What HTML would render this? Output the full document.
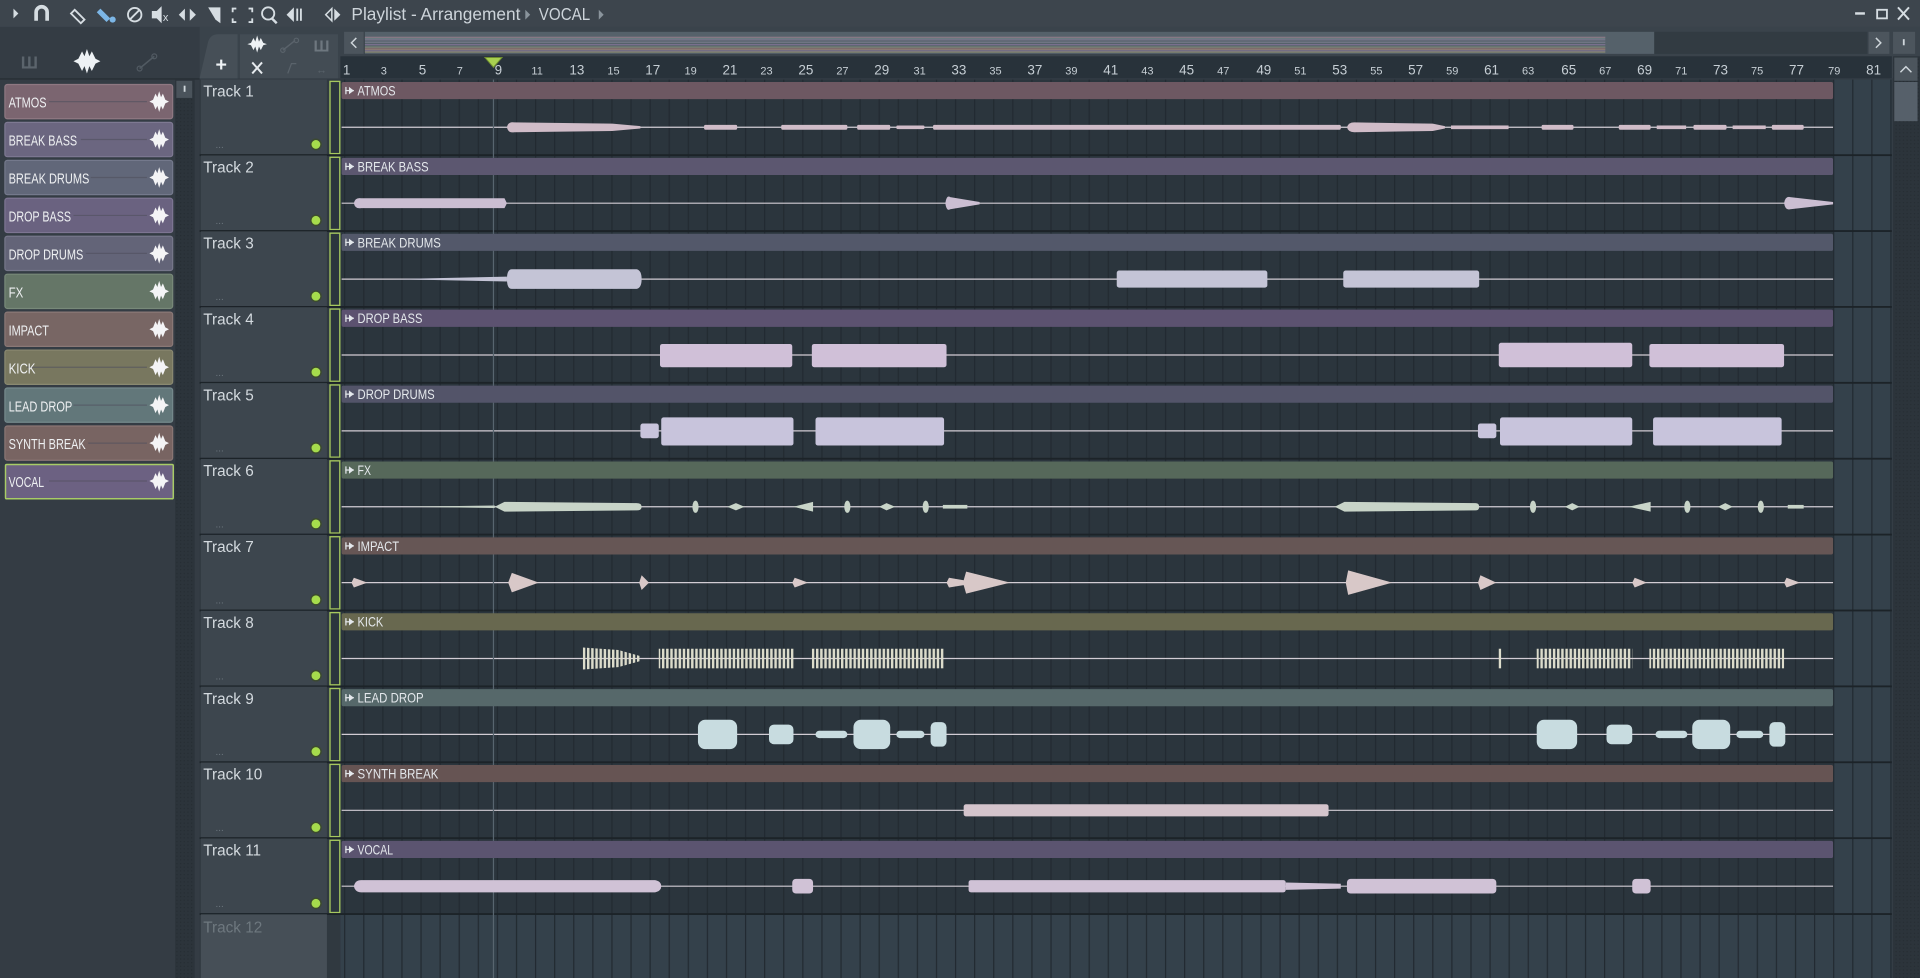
<!DOCTYPE html>
<html><head><meta charset="utf-8"><style>
html,body{margin:0;padding:0;background:#343d45;overflow:hidden}
svg{display:block}
text{font-family:"Liberation Sans",sans-serif}
</style></head><body>
<svg width="1920" height="978" viewBox="0 0 1568 799" preserveAspectRatio="none" xmlns="http://www.w3.org/2000/svg">
<defs>
<pattern id="grid" x="281" y="0" width="15.59" height="10" patternUnits="userSpaceOnUse">
<rect x="0" y="0" width="1" height="10" fill="#222a31"/>
</pattern>
<pattern id="stripe" x="0" y="0" width="3.4" height="10" patternUnits="userSpaceOnUse">
<rect x="0" y="0" width="2" height="10" fill="#dcdccb"/>
</pattern>
<pattern id="hatch" width="3" height="3" patternUnits="userSpaceOnUse">
<rect width="3" height="3" fill="#2c343b"/><rect width="1" height="1" fill="#262d33"/>
</pattern>
</defs>

<!-- top toolbar -->
<rect x="0" y="0" width="1568" height="22" fill="#3d454d"/>
<g fill="#d6dde2" font-size="14">
<polygon points="11,7 15,11 11,15"/>
<path d="M28,17 V10 a6,6 0 0 1 12,0 V17 h-3 V10 a3,3 0 0 0 -6,0 V17z"/>
<path d="M61,8 l8,8 l-3,3 l-8,-8z" fill="none" stroke="#d6dde2" stroke-width="1.5"/>
<path d="M82,7 l8,8 l-3,3 l-8,-8z" fill="#7cb6e6"/><circle cx="92" cy="16" r="2.5" fill="#7cb6e6"/>
<circle cx="110" cy="12" r="5.5" fill="none" stroke="#d6dde2" stroke-width="1.5"/><line x1="106" y1="16" x2="114" y2="8" stroke="#d6dde2" stroke-width="1.5"/>
<polygon points="124,9 128,9 132,5 132,19 128,15 124,15"/><text x="133" y="17" font-size="9">x</text>
<polygon points="146,12 151,7 151,17"/><polygon points="160,12 155,7 155,17"/>
<path d="M170,6 l10,0 l0,13 l-4,-3z"/>
<path d="M193,7 h-3 v3 M203,7 h3 v3 M193,18 h-3 v-3 M203,18 h3 v-3" fill="none" stroke="#d6dde2" stroke-width="1.5"/>
<circle cx="219" cy="11" r="5" fill="none" stroke="#d6dde2" stroke-width="1.5"/><line x1="222" y1="15" x2="226" y2="19" stroke="#d6dde2" stroke-width="2"/>
<polygon points="234,12 240,6 240,18"/><rect x="242" y="7" width="1.5" height="10"/><rect x="245" y="7" width="1.5" height="10"/>
<polygon points="266,12 271,7 271,17" fill="none" stroke="#d6dde2" stroke-width="1.2"/><polygon points="273,7 278,12 273,17"/>
</g>
<text x="287" y="16.5" font-size="14" fill="#cdd4da" textLength="138" lengthAdjust="spacingAndGlyphs">Playlist - Arrangement</text>
<polygon points="429,8 433,12 429,16" fill="#8a949c"/>
<text x="440" y="16.5" font-size="14" fill="#cdd4da" textLength="42" lengthAdjust="spacingAndGlyphs">VOCAL</text>
<polygon points="489,8 493,12 489,16" fill="#8a949c"/>
<rect x="1515" y="10" width="8" height="2" fill="#d6dde2"/>
<rect x="1533" y="8" width="8" height="7" fill="none" stroke="#d6dde2" stroke-width="1.5"/>
<path d="M1550,6 l9,10 M1559,6 l-9,10" stroke="#d6dde2" stroke-width="1.6"/>

<!-- left panel -->
<rect x="0" y="22" width="163" height="777" fill="#343c44"/>
<rect x="0" y="64" width="163" height="1" fill="#262d33"/>
<text x="17" y="56" font-size="14" fill="#5b646c" font-weight="bold">Ш</text>
<g fill="#eef2f5"><path d="M60,50 l4,-2 l3,-6 l2,4 l2,-6 l2,6 l2,-4 l3,6 l4,2 l-4,2 l-3,6 l-2,-4 l-2,6 l-2,-6 l-2,4 l-3,-6z"/></g>
<path d="M114,56 l12,-10" stroke="#515a62" stroke-width="1.3"/><circle cx="114" cy="56" r="2" fill="none" stroke="#515a62"/><circle cx="126" cy="46" r="2" fill="none" stroke="#515a62"/>
<rect x="143" y="65" width="16" height="734" fill="url(#hatch)"/>
<rect x="144" y="66" width="13" height="14" fill="#4a535b"/><rect x="150" y="70" width="1.5" height="5" fill="#cfd6db"/>

<g font-size="12" fill="#eef0f2">
<rect x="4" y="69" width="137" height="28" rx="2" fill="#7b6570" stroke="#8e7882"/>
<rect x="4" y="100" width="137" height="28" rx="2" fill="#6b6680" stroke="#7e7992"/>
<rect x="4" y="131" width="137" height="28" rx="2" fill="#616779" stroke="#74798c"/>
<rect x="4" y="162" width="137" height="28" rx="2" fill="#6a6280" stroke="#7d7592"/>
<rect x="4" y="193" width="137" height="28" rx="2" fill="#636478" stroke="#76778a"/>
<rect x="4" y="224" width="137" height="28" rx="2" fill="#657667" stroke="#788979"/>
<rect x="4" y="255" width="137" height="28" rx="2" fill="#786664" stroke="#8a7876"/>
<rect x="4" y="286" width="137" height="28" rx="2" fill="#78775f" stroke="#8a8971"/>
<rect x="4" y="317" width="137" height="28" rx="2" fill="#62777a" stroke="#75898c"/>
<rect x="4" y="348" width="137" height="28" rx="2" fill="#786462" stroke="#8a7674"/>
<rect x="4.5" y="379.5" width="137" height="28" rx="1" fill="#6c6182" stroke="#a8cc66" stroke-width="1.2"/>
</g>
<g stroke="#50505e" stroke-width="1" opacity="0.6">
<line x1="40" y1="83" x2="120" y2="83"/><line x1="66" y1="114" x2="120" y2="114"/><line x1="74" y1="145" x2="120" y2="145"/><line x1="60" y1="176" x2="120" y2="176"/><line x1="70" y1="207" x2="120" y2="207"/><line x1="22" y1="300" x2="120" y2="300"/><line x1="60" y1="331" x2="120" y2="331"/><line x1="72" y1="362" x2="120" y2="362"/><line x1="40" y1="393" x2="120" y2="393"/>
</g>
<g font-size="12" fill="#eef0f2" lengthAdjust="spacingAndGlyphs">
<text x="7" y="88" textLength="31" lengthAdjust="spacingAndGlyphs">ATMOS</text>
<text x="7" y="119" textLength="56" lengthAdjust="spacingAndGlyphs">BREAK BASS</text>
<text x="7" y="150" textLength="66" lengthAdjust="spacingAndGlyphs">BREAK DRUMS</text>
<text x="7" y="181" textLength="51" lengthAdjust="spacingAndGlyphs">DROP BASS</text>
<text x="7" y="212" textLength="61" lengthAdjust="spacingAndGlyphs">DROP DRUMS</text>
<text x="7" y="243" textLength="12" lengthAdjust="spacingAndGlyphs">FX</text>
<text x="7" y="274" textLength="33" lengthAdjust="spacingAndGlyphs">IMPACT</text>
<text x="7" y="305" textLength="22" lengthAdjust="spacingAndGlyphs">KICK</text>
<text x="7" y="336" textLength="52" lengthAdjust="spacingAndGlyphs">LEAD DROP</text>
<text x="7" y="367" textLength="63" lengthAdjust="spacingAndGlyphs">SYNTH BREAK</text>
<text x="7" y="398" textLength="29" lengthAdjust="spacingAndGlyphs">VOCAL</text>
</g>
<g fill="#f4f4f6">
<path id="wv" d="M122,83 l3,-1.5 l2,-5 l1.5,3 l1.5,-5 l1.5,5 l1.5,-3 l2,5 l3,1.5 l-3,1.5 l-2,5 l-1.5,-3 l-1.5,5 l-1.5,-5 l-1.5,3 l-2,-5z"/>
<use href="#wv" y="31"/><use href="#wv" y="62"/><use href="#wv" y="93"/><use href="#wv" y="124"/><use href="#wv" y="155"/><use href="#wv" y="186"/><use href="#wv" y="217"/><use href="#wv" y="248"/><use href="#wv" y="279"/><use href="#wv" y="310"/>
</g>

<!-- header row for playlist -->
<rect x="163" y="22" width="1405" height="42" fill="#3a434b"/>
<path d="M163,64 L170,34 Q172,28 178,28 L194,28 L194,64z" fill="#464f57"/>
<text x="176" y="58" font-size="16" fill="#eef2f5" font-weight="bold">+</text>
<rect x="196" y="28" width="80" height="36" fill="#434c54"/>
<path d="M202,36 l3,-1 l2,-4 l1.5,3 l1.5,-5 l1.5,5 l1.5,-3 l2,4 l3,1 l-3,1 l-2,4 l-1.5,-3 l-1.5,5 l-1.5,-5 l-1.5,3 l-2,-4z" fill="#eef2f5"/>
<path d="M231,41 l10,-8" stroke="#5a636b" stroke-width="1.2"/><circle cx="231" cy="41" r="1.8" fill="none" stroke="#5a636b"/><circle cx="242" cy="33" r="1.8" fill="none" stroke="#5a636b"/>
<text x="256" y="42" font-size="13" fill="#6e777f" font-weight="bold">Ш</text>
<path d="M206,51 l8,9 M214,51 l-8,9" stroke="#e6eaee" stroke-width="1.6"/>
<path d="M235,60 l3,-8 h4" stroke="#5a636b" fill="none"/><text x="258" y="60" font-size="9" fill="#5a636b">↔</text>
<rect x="281" y="26" width="16" height="18" fill="#4c555d"/><path d="M291,31 l-4,4 l4,4" stroke="#cfd6db" fill="none" stroke-width="1.2"/>
<rect x="298" y="26" width="1053" height="18" fill="#55616a"/>
<g>
<rect x="298" y="30" width="1013" height="1" fill="#8a7a86"/><rect x="298" y="32" width="1013" height="1" fill="#7a768e"/><rect x="298" y="34" width="1013" height="1" fill="#767a8a"/><rect x="298" y="36" width="1013" height="1" fill="#7c7290"/><rect x="298" y="38" width="1013" height="1" fill="#7a8a78"/><rect x="298" y="40" width="1013" height="1" fill="#8a7a74"/><rect x="298" y="42" width="1013" height="1" fill="#8a8a70"/>
<rect x="298" y="31" width="1013" height="1" fill="#6a7a80"/><rect x="298" y="39" width="1013" height="1" fill="#806c6c"/><rect x="298" y="41" width="1013" height="1" fill="#786e8a"/>
</g>
<rect x="1351" y="26" width="174" height="18" fill="#323b42"/>
<rect x="1526" y="26" width="17" height="18" fill="#4c555d"/><path d="M1532,31 l4,4 l-4,4" stroke="#cfd6db" fill="none" stroke-width="1.2"/>
<rect x="1546" y="26" width="18" height="18" fill="#4c555d"/><rect x="1554" y="32" width="1.5" height="5" fill="#cfd6db"/>

<!-- ruler -->
<rect x="278" y="46" width="1267" height="18" fill="#28323a"/>
<g fill="#c6ced4">
<text x="280" y="61" font-size="11">1</text><text x="311" y="61" font-size="9">3</text><text x="342" y="61" font-size="11">5</text><text x="373" y="61" font-size="9">7</text><text x="404" y="61" font-size="11">9</text>
<text x="434" y="61" font-size="9">11</text><text x="465" y="61" font-size="11">13</text><text x="496" y="61" font-size="9">15</text><text x="527" y="61" font-size="11">17</text><text x="559" y="61" font-size="9">19</text>
<text x="590" y="61" font-size="11">21</text><text x="621" y="61" font-size="9">23</text><text x="652" y="61" font-size="11">25</text><text x="683" y="61" font-size="9">27</text><text x="714" y="61" font-size="11">29</text>
<text x="746" y="61" font-size="9">31</text><text x="777" y="61" font-size="11">33</text><text x="808" y="61" font-size="9">35</text><text x="839" y="61" font-size="11">37</text><text x="870" y="61" font-size="9">39</text>
<text x="901" y="61" font-size="11">41</text><text x="932" y="61" font-size="9">43</text><text x="963" y="61" font-size="11">45</text><text x="994" y="61" font-size="9">47</text><text x="1026" y="61" font-size="11">49</text>
<text x="1057" y="61" font-size="9">51</text><text x="1088" y="61" font-size="11">53</text><text x="1119" y="61" font-size="9">55</text><text x="1150" y="61" font-size="11">57</text><text x="1181" y="61" font-size="9">59</text>
<text x="1212" y="61" font-size="11">61</text><text x="1243" y="61" font-size="9">63</text><text x="1275" y="61" font-size="11">65</text><text x="1306" y="61" font-size="9">67</text><text x="1337" y="61" font-size="11">69</text>
<text x="1368" y="61" font-size="9">71</text><text x="1399" y="61" font-size="11">73</text><text x="1430" y="61" font-size="9">75</text><text x="1461" y="61" font-size="11">77</text><text x="1493" y="61" font-size="9">79</text>
<text x="1524" y="61" font-size="11">81</text>
</g>
<polygon points="396,47 410,47 403,55" fill="#a8d050" stroke="#6e8c30" stroke-width="0.8"/>

<!-- right scrollbar -->
<rect x="1546" y="46" width="22" height="753" fill="url(#hatch)"/>
<rect x="1547" y="47" width="19" height="19" fill="#4c555d"/><path d="M1552,59 l4.5,-4.5 l4.5,4.5" stroke="#cfd6db" fill="none" stroke-width="1.2"/>
<rect x="1547" y="67" width="19" height="32" fill="#56606a"/>

<!-- track area backgrounds -->
<rect x="163" y="65" width="115" height="734" fill="#303940"/>
<rect x="278" y="65" width="1267" height="734" fill="#2b353d"/>
<rect x="1497" y="65" width="48" height="734" fill="#34414b"/>
<rect x="278" y="747" width="1267" height="52" fill="#34414b"/>
<rect x="278" y="65" width="1267" height="734" fill="url(#grid)"/>

<!-- track template -->
<g id="tk">
<rect x="164" y="65" width="103" height="61" fill="#3d464e"/>
<text x="176" y="121" font-size="8" fill="#6c767e">...</text>
<circle cx="258" cy="118" r="4.2" fill="#a6dc4c" stroke="#3c4a30" stroke-width="1.2"/>
<rect x="269.5" y="66.5" width="8" height="59" fill="#2b353d" stroke="#a6c85e" stroke-width="1.1"/>
<rect x="163" y="126" width="1382" height="1.5" fill="#1c2328"/>
<line x1="279" y1="104" x2="1497" y2="104" stroke="#d2ccd4" stroke-width="1"/>
</g>
<use href="#tk" y="62"/><use href="#tk" y="124"/><use href="#tk" y="186"/><use href="#tk" y="248"/><use href="#tk" y="310"/><use href="#tk" y="372"/><use href="#tk" y="434"/><use href="#tk" y="496"/><use href="#tk" y="558"/><use href="#tk" y="620"/>
<rect x="164" y="747" width="103" height="52" fill="#464f57"/>
<text x="166" y="762" font-size="12.5" fill="#6e787f">Track 12</text>

<!-- playhead line -->
<rect x="402.5" y="65" width="1" height="734" fill="#58656f"/>

<!-- track labels -->
<g font-size="12.5" fill="#d4dadf">
<text x="166" y="79">Track 1</text><text x="166" y="141">Track 2</text><text x="166" y="203">Track 3</text><text x="166" y="265">Track 4</text><text x="166" y="327">Track 5</text><text x="166" y="389">Track 6</text><text x="166" y="451">Track 7</text><text x="166" y="513">Track 8</text><text x="166" y="575">Track 9</text><text x="166" y="637">Track 10</text><text x="166" y="699">Track 11</text>
</g>

<!-- clip headers -->
<g>
<rect x="279" y="67" width="1218" height="14" rx="1.5" fill="#6d5862"/>
<rect x="279" y="129" width="1218" height="14" rx="1.5" fill="#5c5770"/>
<rect x="279" y="191" width="1218" height="14" rx="1.5" fill="#53586a"/>
<rect x="279" y="253" width="1218" height="14" rx="1.5" fill="#5c5270"/>
<rect x="279" y="315" width="1218" height="14" rx="1.5" fill="#535469"/>
<rect x="279" y="377" width="1218" height="14" rx="1.5" fill="#56685a"/>
<rect x="279" y="439" width="1218" height="14" rx="1.5" fill="#665655"/>
<rect x="279" y="501" width="1218" height="14" rx="1.5" fill="#68684f"/>
<rect x="279" y="563" width="1218" height="14" rx="1.5" fill="#56686a"/>
<rect x="279" y="625" width="1218" height="14" rx="1.5" fill="#665453"/>
<rect x="279" y="687" width="1218" height="14" rx="1.5" fill="#5b5470"/>
</g>
<g font-size="11" fill="#e4e8ec">
<text x="292" y="78" textLength="31" lengthAdjust="spacingAndGlyphs">ATMOS</text>
<text x="292" y="140" textLength="58" lengthAdjust="spacingAndGlyphs">BREAK BASS</text>
<text x="292" y="202" textLength="68" lengthAdjust="spacingAndGlyphs">BREAK DRUMS</text>
<text x="292" y="264" textLength="53" lengthAdjust="spacingAndGlyphs">DROP BASS</text>
<text x="292" y="326" textLength="63" lengthAdjust="spacingAndGlyphs">DROP DRUMS</text>
<text x="292" y="388" textLength="11" lengthAdjust="spacingAndGlyphs">FX</text>
<text x="292" y="450" textLength="34" lengthAdjust="spacingAndGlyphs">IMPACT</text>
<text x="292" y="512" textLength="21" lengthAdjust="spacingAndGlyphs">KICK</text>
<text x="292" y="574" textLength="54" lengthAdjust="spacingAndGlyphs">LEAD DROP</text>
<text x="292" y="636" textLength="66" lengthAdjust="spacingAndGlyphs">SYNTH BREAK</text>
<text x="292" y="698" textLength="29" lengthAdjust="spacingAndGlyphs">VOCAL</text>
</g>
<g fill="#e4e8ec" stroke="#e4e8ec" stroke-width="1">
<g id="ar"><line x1="282" y1="74" x2="289" y2="74"/><polygon points="285,71 289,74 285,77" stroke="none"/><line x1="282.5" y1="71" x2="282.5" y2="77"/></g>
<use href="#ar" y="62"/><use href="#ar" y="124"/><use href="#ar" y="186"/><use href="#ar" y="248"/><use href="#ar" y="310"/><use href="#ar" y="372"/><use href="#ar" y="434"/><use href="#ar" y="496"/><use href="#ar" y="558"/><use href="#ar" y="620"/>
</g>

<!-- waveforms -->
<g fill="#d0bcc8">
<path d="M414,104 Q415,99 420,100 L500,101 L523,103 L523,105 L500,107 L420,108 Q415,109 414,104z"/>
<rect x="575" y="102" width="27" height="4" rx="1"/><rect x="638" y="102" width="54" height="4" rx="1"/><rect x="700" y="102" width="27" height="4" rx="1"/><rect x="732" y="102.5" width="23" height="3" rx="1"/><rect x="762" y="102" width="333" height="4" rx="1"/>
<path d="M1100,104 Q1101,100 1106,100 L1170,101 L1180,103 L1180,105 L1170,107 L1106,108 Q1101,108 1100,104z"/>
<rect x="1185" y="102.5" width="47" height="3"/>
<rect x="1259" y="102" width="26" height="4" rx="1"/><rect x="1322" y="102" width="26" height="4" rx="1"/><rect x="1353" y="102.5" width="24" height="3"/><rect x="1383" y="102" width="27" height="4" rx="1"/><rect x="1415" y="102.5" width="27" height="3"/><rect x="1447" y="102" width="26" height="4" rx="1"/>
</g>
<g fill="#cbbed2">
<path d="M289,166 Q290,161 295,162 L412,162 L414,166 L412,170 L295,170 Q290,171 289,166z"/>
<path d="M772,166 Q773,159 776,161 L800,165 L800,167 L776,171 Q773,173 772,166z"/>
<path d="M1457,166 Q1458,160 1462,161 L1497,165 L1497,167 L1462,171 Q1458,172 1457,166z"/>
</g>
<g fill="#c4c4d6">
<path d="M320,228 L414,226 L414,230z"/>
<path d="M414,228 Q414,220 418,220 L520,220 Q524,221 524,228 Q524,235 520,236 L418,236 Q414,236 414,228z"/>
<rect x="912" y="221" width="123" height="14" rx="2"/><rect x="1097" y="221" width="111" height="14" rx="2"/>
</g>
<g fill="#d0c0d8">
<rect x="539" y="281" width="108" height="19" rx="2"/><rect x="663" y="281" width="110" height="19" rx="2"/><rect x="1224" y="280" width="109" height="20" rx="2"/><rect x="1347" y="281" width="110" height="19" rx="2"/>
</g>
<g fill="#c8c4dc">
<rect x="523" y="346" width="15" height="12" rx="2"/><rect x="540" y="341" width="108" height="23" rx="2"/><rect x="666" y="341" width="105" height="23" rx="2"/>
<rect x="1207" y="346" width="15" height="12" rx="2"/><rect x="1225" y="341" width="108" height="23" rx="2"/><rect x="1350" y="341" width="105" height="23" rx="2"/>
</g>
<g fill="#c8d4c8">
<path d="M330,414 L404,413 L404,415z"/>
<path d="M404,414 L412,410 L520,411 Q524,411 524,414 Q524,417 520,417 L412,418z"/>
<ellipse cx="568" cy="414" rx="2.5" ry="5"/><path d="M594,414 L601,411 L608,414 L601,417z"/><path d="M648,414 L664,410 L664,418z"/><ellipse cx="692" cy="414" rx="2.5" ry="5"/><path d="M718,414 L724,411 L731,414 L724,417z"/><ellipse cx="756" cy="414" rx="2.5" ry="5"/><rect x="770" y="412.5" width="20" height="3"/>
<path d="M1090,414 L1098,410 L1205,411 Q1208,411 1208,414 Q1208,417 1205,417 L1098,418z"/>
<ellipse cx="1252" cy="414" rx="2.5" ry="5"/><path d="M1278,414 L1284,411 L1290,414 L1284,417z"/><path d="M1330,414 L1348,410 L1348,418z"/><ellipse cx="1378" cy="414" rx="2.5" ry="5"/><path d="M1403,414 L1409,411 L1415,414 L1409,417z"/><ellipse cx="1438" cy="414" rx="2.5" ry="5"/><rect x="1460" y="412.5" width="13" height="3"/>
</g>
<g fill="#d8c8c8">
<path d="M287,476 L289,472 L300,476 L289,480z"/>
<path d="M415,476 L418,468 L440,476 L418,484z"/>
<path d="M522,476 L524,470 L530,476 L524,482z"/>
<path d="M647,476 L649,472 L660,476 L649,480z"/>
<path d="M773,476 L775,472 L787,474 L789,467 L825,476 L789,485 L787,478 L775,480z"/>
<path d="M1099,476 L1101,466 L1137,476 L1101,486z"/>
<path d="M1207,476 L1209,470 L1222,476 L1209,482z"/>
<path d="M1333,476 L1335,472 L1345,476 L1335,480z"/>
<path d="M1457,476 L1459,472 L1470,476 L1459,480z"/>
</g>
<g fill="url(#stripe)">
<path d="M476,538 L476,529 L505,531 L523,536 L523,540 L505,545 L476,547z"/>
<rect x="538" y="530" width="110" height="16"/><rect x="663" y="530" width="108" height="16"/>
<rect x="1223" y="530" width="3" height="16"/><rect x="1255" y="530" width="78" height="16"/><rect x="1347" y="530" width="110" height="16"/>
</g>
<g fill="#c8dce0">
<rect x="570" y="588" width="32" height="24" rx="6"/><rect x="628" y="592" width="20" height="16" rx="4"/><rect x="666" y="597" width="26" height="6" rx="3"/><rect x="697" y="588" width="30" height="24" rx="6"/><rect x="732" y="597" width="23" height="6" rx="3"/><rect x="760" y="590" width="13" height="20" rx="4"/>
<rect x="1255" y="588" width="33" height="24" rx="6"/><rect x="1312" y="592" width="21" height="16" rx="4"/><rect x="1352" y="597" width="26" height="6" rx="3"/><rect x="1382" y="588" width="31" height="24" rx="6"/><rect x="1418" y="597" width="22" height="6" rx="3"/><rect x="1445" y="590" width="13" height="20" rx="4"/>
</g>
<g fill="#d4c4cc"><rect x="787" y="657" width="298" height="10" rx="2"/></g>
<g fill="#d0c2d6">
<path d="M289,724 Q290,719 295,719 L535,719 Q540,720 540,724 Q540,728 535,729 L295,729 Q290,729 289,724z"/>
<rect x="647" y="718" width="17" height="12" rx="3"/>
<rect x="791" y="719" width="259" height="10" rx="2"/><path d="M1050,721 L1095,722 L1095,726 L1050,727z"/>
<rect x="1100" y="718" width="122" height="12" rx="3"/><rect x="1333" y="718" width="15" height="12" rx="3"/>
</g>
</svg>
</body></html>
